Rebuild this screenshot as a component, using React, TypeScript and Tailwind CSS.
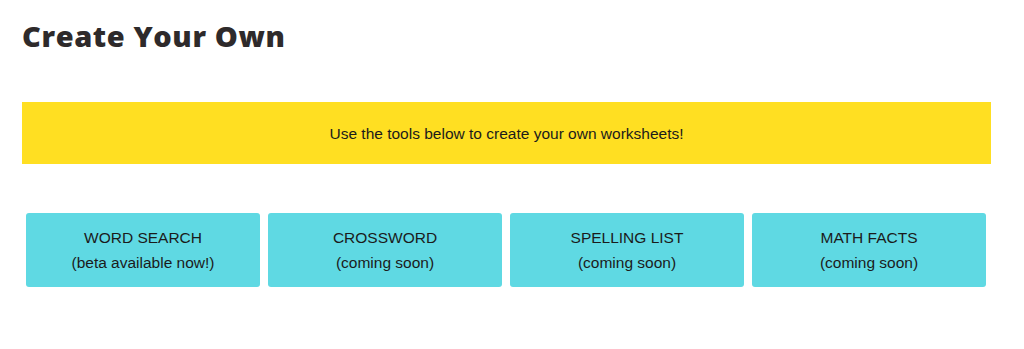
const tools = [
  { name: 'WORD SEARCH', note: '(beta available now!)' },
  { name: 'CROSSWORD', note: '(coming soon)' },
  { name: 'SPELLING LIST', note: '(coming soon)' },
  { name: 'MATH FACTS', note: '(coming soon)' },
];

export default function App() {
  return (
    <div className="w-[1024px] h-[349px] bg-white px-[22px] pt-[18px] font-['Liberation_Sans',Arial,sans-serif] text-[#1b1b1b]">
      <h1 className="font-['Open_Sans',sans-serif] font-extrabold text-[29px] leading-[36px] text-[#2e2a2b] tracking-[0.6px]">
        Create Your Own
      </h1>

      <div className="mt-[48px] w-[969px] h-[62px] bg-[#ffdf22] flex items-center justify-center pt-[2px] text-[15.5px]">
        Use the tools below to create your own worksheets!
      </div>

      <div className="mt-[49px] w-[968px] grid grid-cols-4">
        {tools.map((tool) => (
          <button
            key={tool.name}
            className="mx-1 h-[74px] rounded-[3px] bg-[#5fd9e3] flex flex-col items-center justify-center text-[15.5px] leading-[25px]"
          >
            <span>{tool.name}</span>
            <span>{tool.note}</span>
          </button>
        ))}
      </div>
    </div>
  );
}
